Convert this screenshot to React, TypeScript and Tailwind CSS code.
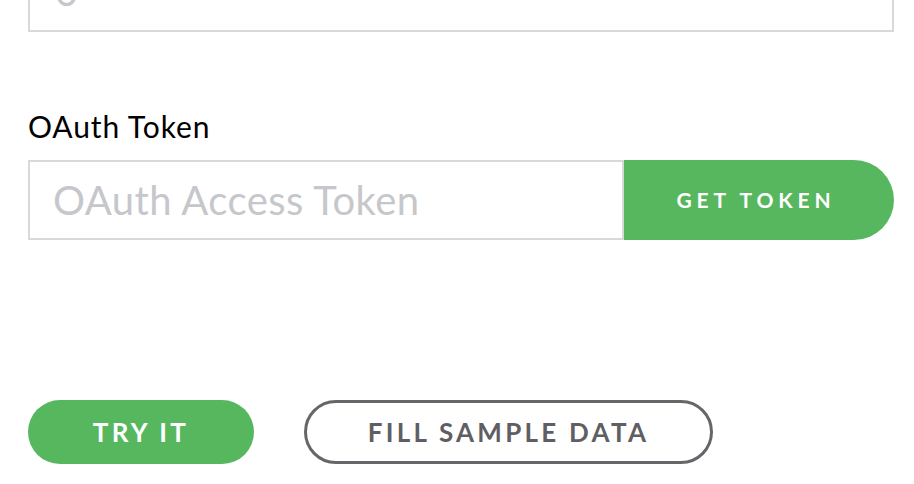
export default function App() {
  return (
    <div className="h-[484px] overflow-hidden bg-white pl-[28px] pr-[20px] font-['Lato',sans-serif]">
      <div className="-mt-[48px] flex h-[80px] items-start border-2 border-[#d9d9d9]">
        <input
          type="text"
          placeholder="0"
          className="-mt-[1px] h-[76px] w-full bg-transparent pl-[25px] text-[40px] outline-none placeholder:text-[#c6c7cb]"
        />
      </div>

      <label className="mt-[76px] block text-[30px] leading-[36px] tracking-[0.03em] text-black">
        OAuth Token
      </label>

      <div className="mt-[16px] flex h-[80px]">
        <input
          type="text"
          placeholder="OAuth Access Token"
          className="h-full w-[596px] border-2 border-[#d9d9d9] pl-[23px] text-[40px] tracking-[0.011em] outline-none placeholder:text-[#c6c7cb]"
        />
        <button className="h-full flex-1 rounded-r-full bg-[#56b75f] pr-[6px] text-[21px] font-bold tracking-[0.23em] text-white">
          GET TOKEN
        </button>
      </div>

      <div className="mt-[160px] flex gap-[50px]">
        <button className="h-[64px] w-[226px] rounded-full bg-[#56b75f] text-[26px] font-bold tracking-[0.125em] text-white">
          TRY IT
        </button>
        <button className="h-[64px] w-[409px] rounded-full border-[3px] border-[#66666a] text-[26px] font-bold tracking-[0.125em] text-[#5f5f63]">
          FILL SAMPLE DATA
        </button>
      </div>
    </div>
  );
}
